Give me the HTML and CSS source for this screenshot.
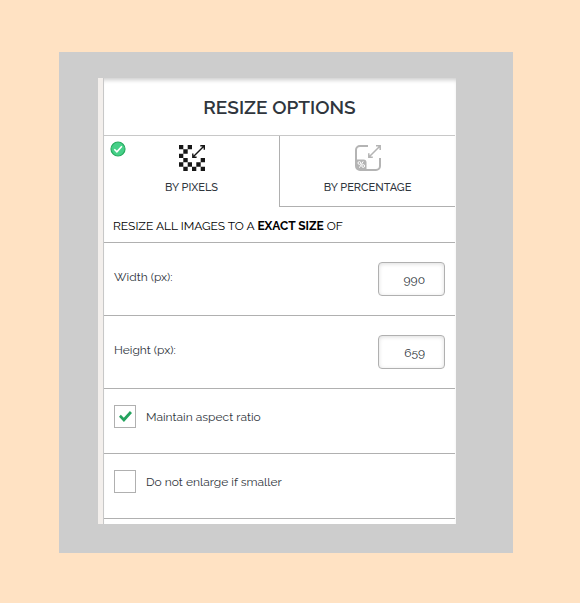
FILE: index.html
```html
<!DOCTYPE html>
<html lang="en">
<head>
    <meta charset="UTF-8">
    <meta name="viewport" content="width=device-width, initial-scale=1.0">
    <title>Resize options</title>
    <link rel="stylesheet" href="styles.css">
</head>
<body>
    <div class="frame">
        <form class="panel">
            <h1 class="title">RESIZE OPTIONS</h1>
            <div class="tabs">
                <button type="button" class="tab active">
                    <svg class="tab-check" viewBox="0 0 16 16">
                        <circle cx="8" cy="8" r="7" fill="#46d088" stroke="#27ab60" stroke-width="1.2"/>
                        <path d="M4.3 8.3l2.6 2.6 5-5.6" fill="none" stroke="#fff" stroke-width="1.6"/>
                    </svg>
                    <svg class="tab-icon" viewBox="0 0 26 26" fill="#161616">
                        <path d="M0 0h4.3v4.3H0zM8.7 0H13v4.3H8.7zM4.3 4.3h4.4v4.4H4.3zM0 8.7h4.3V13H0zM4.3 13h4.4v4.3H4.3zM21.7 13H26v4.3h-4.3zM0 17.3h4.3v4.4H0zM8.7 17.3H13v4.4H8.7zM17.3 17.3h4.4v4.4h-4.4zM4.3 21.7h4.4V26H4.3zM13 21.7h4.3V26H13zM21.7 21.7H26V26h-4.3z"/>
                        <path d="M14 12L25.3.7M21.3.7h4v4M13.8 8.5v3.8h3.8" fill="none" stroke="#161616" stroke-width="1.4"/>
                    </svg>
                    <span>BY PIXELS</span>
                </button>
                <button type="button" class="tab">
                    <svg class="tab-icon" viewBox="0 0 26 26" fill="none" stroke="#b4b4b4">
                        <path d="M13 1H5a4 4 0 0 0-4 4v16a4 4 0 0 0 4 4h16a4 4 0 0 0 4-4v-8" stroke-width="2"/>
                        <path d="M14 12L25.3.7M21 .8h4.2V5M13.8 8.2v4h4" stroke-width="1.5"/>
                        <path d="M1 14.5h7.5a3 3 0 0 1 3 3V25H5a4 4 0 0 1-4-4z" fill="#b4b4b4" stroke="none"/>
                        <g stroke="#fff" stroke-width="1">
                            <circle cx="4.4" cy="18" r="1.4"/>
                            <circle cx="8.2" cy="21" r="1.4"/>
                            <path d="M8.2 16.3l-3.8 6.4"/>
                        </g>
                    </svg>
                    <span>BY PERCENTAGE</span>
                </button>
            </div>
            <p class="hint">RESIZE ALL IMAGES TO A <strong>EXACT SIZE</strong> OF</p>
            <div class="row">
                <label for="width">Width (px):</label>
                <input class="number" type="text" id="width" value="990">
            </div>
            <div class="row">
                <label for="height">Height (px):</label>
                <input class="number" type="text" id="height" value="659">
            </div>
            <div class="row option">
                <input class="check" type="checkbox" id="ratio" checked>
                <label for="ratio">Maintain aspect ratio</label>
            </div>
            <div class="row option">
                <input class="check" type="checkbox" id="enlarge">
                <label for="enlarge">Do not enlarge if smaller</label>
            </div>
        </form>
    </div>
</body>
</html>
```
FILE: styles.css
```css
* {
    box-sizing: border-box;
}
body {
    margin: 0;
    padding: 52px 67px 50px 59px;
    background-color: #ffe2c3;
    color: #30363d;
    font-family: Raleway, 'Open Sans', sans-serif;
    font-size: 12px;
    line-height: 16px;
}
.frame {
    padding: 26px 57px 29px 39px;
    background-color: #cdcdcd;
}
.panel {
    padding: 0 1px 5px 0;
    border-left: 5px solid #f3efec;
    background-color: #fff;
    box-shadow: inset 1px 0 0 #c8c8c8, inset 0 4px 4px -2px #ccc;
}
.title {
    margin: 0 0 0 1px;
    padding: 17px 0 16px;
    border-bottom: 1px solid #c8c8c8;
    font-size: 19px;
    font-weight: 600;
    line-height: 24px;
    text-align: center;
}
.tabs {
    display: grid;
    grid-template-columns: 1fr 1fr;
}
.tab {
    position: relative;
    display: flex;
    flex-direction: column;
    align-items: center;
    gap: 9px;
    padding: 9px 0 10px;
    border: solid #b0b0b0;
    border-width: 0 0 1px 1px;
    background: none;
    color: inherit;
    font: inherit;
    font-size: 11px;
    font-weight: 500;
    cursor: pointer;
}
.tab.active {
    border-color: transparent;
}
.tab-icon {
    width: 26px;
    height: 26px;
}
.tab-check {
    position: absolute;
    top: 5px;
    left: 6px;
    width: 16px;
    height: 16px;
}
.hint {
    margin: 0 0 0 1px;
    padding: 11px 9px 8px;
    border-bottom: 1px solid #b0b0b0;
    color: #000;
}
.row {
    display: flex;
    justify-content: space-between;
    align-items: flex-start;
    margin-left: 1px;
    padding: 19px 10px;
    border-bottom: 1px solid #b0b0b0;
}
.row label {
    padding-top: 7px;
}
.number {
    width: 67px;
    height: 34px;
    padding: 2px 19px 0 8px;
    border: 1px solid #b0b0b0;
    border-radius: 4px;
    background-color: #fff;
    box-shadow: inset 0 1px 4px #ddd;
    color: inherit;
    font: inherit;
    text-align: right;
}
.option {
    justify-content: flex-start;
    align-items: center;
    gap: 10px;
    padding: 16px 10px 25px;
}
.option label {
    padding-top: 0;
}
.check {
    appearance: none;
    width: 22px;
    height: 23px;
    margin: 0;
    border: 1px solid #b0b0b0;
    background-color: #fff;
}
.check:checked::before {
    content: '';
    display: block;
    width: 13px;
    height: 11px;
    margin: 5px 4px;
    background-color: #25a35f;
    clip-path: polygon(0 52%, 14% 34%, 37% 62%, 84% 0, 100% 18%, 38% 100%);
}
```
